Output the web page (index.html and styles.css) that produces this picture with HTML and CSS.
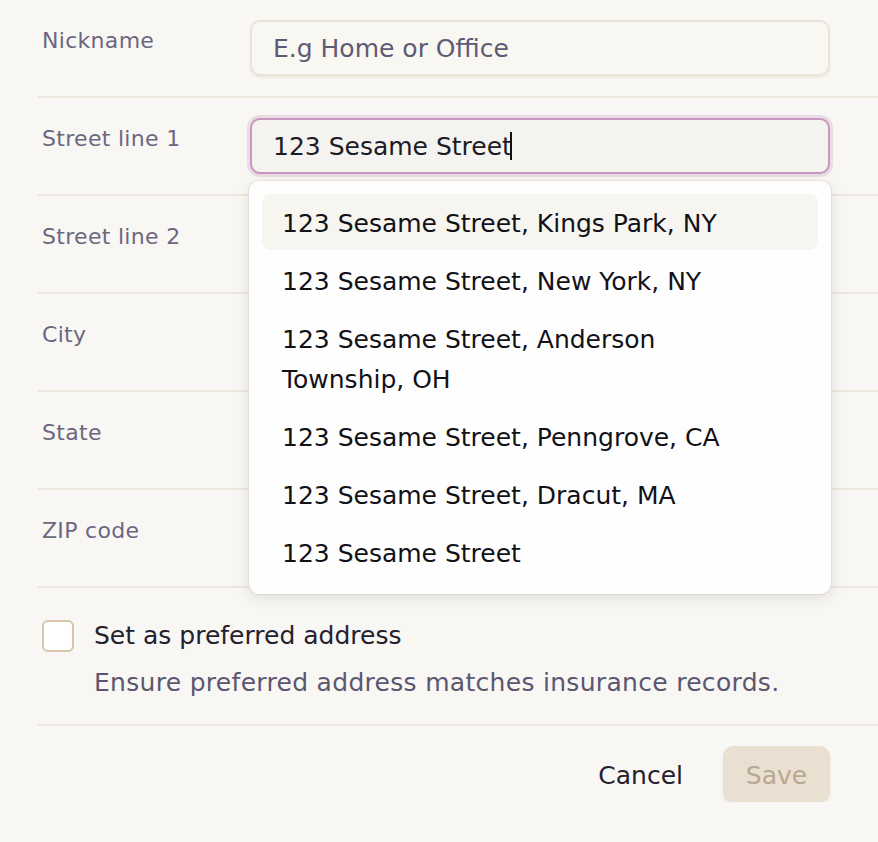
FILE: index.html
```html
<!DOCTYPE html>
<html lang="en">
<head>
<meta charset="utf-8">
<title>Address form</title>
<link rel="stylesheet" href="styles.css">
</head>
<body>
<form class="form">
  <div class="row">
    <label class="label">Nickname</label>
    <div class="field"><div class="input placeholder">E.g Home or Office</div></div>
  </div>
  <div class="row">
    <label class="label">Street line 1</label>
    <div class="field">
      <div class="input focused">123 Sesame Street<span class="caret"></span></div>
      <ul class="dropdown">
        <li class="option active">123 Sesame Street, Kings Park, NY</li>
        <li class="option">123 Sesame Street, New York, NY</li>
        <li class="option">123 Sesame Street, Anderson Township, OH</li>
        <li class="option">123 Sesame Street, Penngrove, CA</li>
        <li class="option">123 Sesame Street, Dracut, MA</li>
        <li class="option">123 Sesame Street</li>
      </ul>
    </div>
  </div>
  <div class="row">
    <label class="label">Street line 2</label>
    <div class="field"><div class="input"></div></div>
  </div>
  <div class="row">
    <label class="label">City</label>
    <div class="field"><div class="input"></div></div>
  </div>
  <div class="row">
    <label class="label">State</label>
    <div class="field"><div class="input"></div></div>
  </div>
  <div class="row">
    <label class="label">ZIP code</label>
    <div class="field"><div class="input"></div></div>
  </div>
  <div class="pref">
    <div class="pref-line">
      <span class="checkbox"></span>
      <span class="pref-title">Set as preferred address</span>
    </div>
    <p class="pref-help">Ensure preferred address matches insurance records.</p>
  </div>
  <div class="actions">
    <button type="button" class="btn-cancel">Cancel</button>
    <button type="button" class="btn-save">Save</button>
  </div>
</form>
</body>
</html>
```
FILE: styles.css
```css
html, body {
  margin: 0;
  padding: 0;
  background: #f8f7f4;
  font-family: "DejaVu Sans", "Liberation Sans", sans-serif;
  overflow: hidden;
}
.form {
  margin-left: 38px;
  width: 840px;
}
.row {
  display: flex;
  padding: 20px 0;
  border-bottom: 2px solid #ece6dc;
}
.label {
  width: 212px;
  padding: 1px 0 0 4px;
  box-sizing: border-box;
  font-size: 22px;
  letter-spacing: 0.3px;
  line-height: 40px;
  color: #6c6781;
}
.field {
  position: relative;
  width: 580px;
}
.input {
  box-sizing: border-box;
  height: 56px;
  border: 2px solid #ebe3d7;
  border-radius: 10px;
  background: #f8f7f2;
  box-shadow: 0 2px 2px rgba(200, 190, 170, 0.22);
  padding: 1px 21px 0;
  font-size: 25px;
  line-height: 52px;
  color: #1d1b24;
  white-space: nowrap;
}
.placeholder { color: #5f5a74; }
.input.focused {
  border-color: #c995c0;
  background: #f4f3f0;
  box-shadow: 0 0 0 3px #e8dde4;
}
.caret {
  display: inline-block;
  width: 2px;
  height: 28px;
  background: #111;
  vertical-align: middle;
  margin-left: -2px;
  position: relative;
  top: -2px;
}
.dropdown {
  position: absolute;
  left: -1px;
  top: 63px;
  width: 582px;
  box-sizing: border-box;
  margin: 0;
  padding: 13px 13px 14px 13px;
  list-style: none;
  background: #fffeff;
  border-radius: 10px;
  box-shadow: 0 4px 14px rgba(60, 50, 30, 0.12), 0 0 0 1px rgba(230, 225, 215, 0.6);
  z-index: 5;
  display: flex;
  flex-direction: column;
  gap: 2px;
}
.option {
  padding: 10px 90px 6px 20px;
  font-size: 25px;
  line-height: 40px;
  color: #121117;
  border-radius: 8px;
}
.option.active {
  background: #f6f5f0;
}
.pref {
  padding: 32px 0 24px 4px;
  border-bottom: 2px solid #ece6dc;
}
.pref-line {
  display: flex;
  align-items: center;
  gap: 20px;
  height: 32px;
}
.checkbox {
  width: 32px;
  height: 32px;
  box-sizing: border-box;
  border: 2px solid #d7c6ab;
  border-radius: 6px;
  background: #fff;
}
.pref-title {
  font-size: 25px;
  line-height: 32px;
  color: #24212c;
}
.pref-help {
  margin: 13px 0 0 52px;
  height: 35px;
  font-size: 25px;
  letter-spacing: 0.3px;
  line-height: 36px;
  color: #5c5670;
  white-space: nowrap;
}
.actions {
  display: flex;
  justify-content: flex-end;
  gap: 40px;
  padding: 20px 48px 0 0;
}
.btn-cancel {
  border: 0;
  background: none;
  font: inherit;
  font-size: 25px;
  color: #24212c;
  padding: 2px 0 0;
  height: 56px;
}
.btn-save {
  border: 0;
  font: inherit;
  font-size: 25px;
  color: #b9a78f;
  background: #e9e0d2;
  border-radius: 10px;
  height: 56px;
  width: 107px;
  padding: 2px 0 0;
  box-shadow: 0 2px 2px rgba(200, 190, 170, 0.3);
}
```
